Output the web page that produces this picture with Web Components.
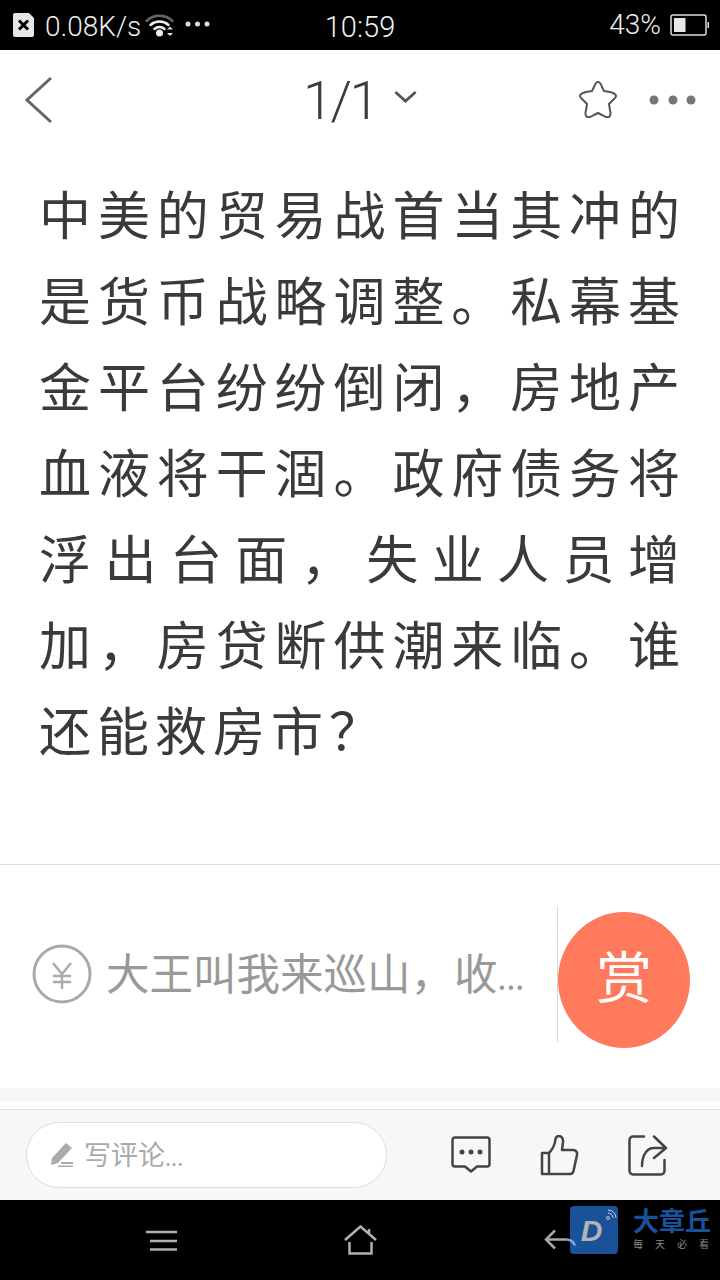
<!DOCTYPE html>
<html lang="zh">
<head>
<meta charset="utf-8">
<title>文章</title>
<style>
html,body{margin:0;padding:0;background:#fff;}
body{width:720px;height:1280px;overflow:hidden;position:relative;font-family:"Noto Sans CJK SC","Noto Sans",sans-serif;}
</style>
</head>
<body>
<status-bar></status-bar>
<top-nav></top-nav>
<article-body>中美的贸易战首当其冲的是货币战略调整。私幕基金平台纷纷倒闭，房地产血液将干涸。政府债务将浮出台面，失业人员增加，房贷断供潮来临。谁还能救房市？</article-body>
<reward-bar>大王叫我来巡山，收<span style="font-size:32px">...</span></reward-bar>
<comment-bar></comment-bar>
<nav-bar></nav-bar>
<script>
class StatusBar extends HTMLElement {
    constructor() {
        super()
        this.attachShadow({ mode: 'open' }).innerHTML = `
        <style>
        :host{display:grid;grid-template-columns:1fr auto 1fr;align-items:center;height:50px;background:#000;color:#eee;font:300 28px Roboto,sans-serif;}
        .left{display:flex;align-items:center;padding-left:13px;}
        .time{padding-top:4px;font-size:29px;}
        .speed{margin-left:11px;padding-top:2px;}
        .wifi{margin-left:4px;}
        .dots{margin-left:10px;margin-top:-2px;}
        .right{display:flex;align-items:center;justify-content:flex-end;padding-right:11px;}
        .pct{margin-right:9px;margin-top:-2px;}
        </style>
        <div class="left">
            <svg width="21" height="24" viewBox="0 0 21 24"><path d="M0 2a2 2 0 0 1 2-2h14l5 5v17a2 2 0 0 1-2 2H2a2 2 0 0 1-2-2z" fill="#e6e6e6"/><path d="M6 7.500l9 9M15 7.500l-9 9" stroke="#000" stroke-width="3"/></svg>
            <span class="speed">0.08K/s</span>
            <svg class="wifi" width="30" height="26" viewBox="0 0 30 26" fill="none" stroke-linecap="round"><path d="M1.500 9a19 19 0 0 1 26 0" stroke="#666" stroke-width="2.500"/><path d="M5.500 13a13.500 13.500 0 0 1 18 0" stroke="#eee" stroke-width="2.500"/><path d="M9.500 17a7.500 7.500 0 0 1 10 0" stroke="#eee" stroke-width="2.500"/><circle cx="14.500" cy="21" r="3.500" fill="#eee"/><path d="M22 17.500h6l-3-3zM22 21h6l-3 3z" fill="#ddd"/></svg>
            <svg class="dots" width="25" height="6" viewBox="0 0 25 6" fill="#ddd"><circle cx="3" cy="3" r="2.500"/><circle cx="12.500" cy="3" r="2.500"/><circle cx="22" cy="3" r="2.500"/></svg>
        </div>
        <span class="time">10:59</span>
        <div class="right">
            <span class="pct">43%</span>
            <svg width="39" height="22" viewBox="0 0 39 22" fill="none"><rect x="1" y="1" width="35" height="20" rx="2" stroke="#ddd" stroke-width="1.500"/><rect x="4" y="4" width="11.500" height="14" fill="#e6e6e6"/><rect x="37.500" y="8" width="1.500" height="6" fill="#ddd"/></svg>
        </div>`
    }
}
customElements.define('status-bar', StatusBar)

class TopNav extends HTMLElement {
    constructor() {
        super()
        this.attachShadow({ mode: 'open' }).innerHTML = `
        <style>
        :host{display:grid;grid-template-columns:1fr auto 1fr;align-items:center;height:100px;background:#fff;color:#444;}
        .back{padding-left:25px;display:flex;}
        .mid{display:flex;align-items:center;font:300 54px Roboto,sans-serif;letter-spacing:-2.500px;color:#3c3c3c;}
        .mid svg{margin-left:17px;margin-top:-6px;width:23px;}
        .acts{display:flex;align-items:center;justify-content:flex-end;padding-right:24px;}
        .acts svg:first-child{margin-right:31px;margin-top:-2px;}
        </style>
        <div class="back"><svg width="28" height="48" viewBox="0 0 28 48" fill="none"><path d="M26 2L2 24l24 22" stroke="#666" stroke-width="3"/></svg></div>
        <div class="mid">1/1<svg width="25" height="14" viewBox="0 0 25 14" fill="none"><path d="M1.500 1.500l11 10 11-10" stroke="#555" stroke-width="3"/></svg></div>
        <div class="acts">
            <svg width="40" height="38" viewBox="0 0 40 38" fill="none"><path d="M20 2c2 0 3 2 4 5l2 4 6 1c4 1 6 2 6 4s-2 3-4 5l-3 3 1 6c1 4 1 6-1 7s-4 0-7-2l-4-2-4 2c-3 2-5 3-7 2s-2-3-1-7l1-6-3-3c-2-2-4-3-4-5s2-3 6-4l6-1 2-4c1-3 2-5 4-5z" stroke="#555" stroke-width="2" stroke-linejoin="round"/></svg>
            <svg width="47" height="10" viewBox="0 0 47 10" fill="#777"><circle cx="5" cy="5" r="4.500"/><circle cx="24" cy="5" r="4.500"/><circle cx="42" cy="5" r="4.500"/></svg>
        </div>`
    }
}
customElements.define('top-nav', TopNav)

class ArticleBody extends HTMLElement {
    constructor() {
        super()
        this.attachShadow({ mode: 'open' }).innerHTML = `
        <style>
        :host{display:block;height:715px;box-sizing:border-box;padding:20px 34px 0 39px;background:#fff;border-bottom:1px solid #ddd;}
        p{margin:0;font:400 52px/86px "Noto Sans CJK SC",sans-serif;letter-spacing:6px;color:#3a3a3a;text-align:justify;line-break:strict;}
        </style>
        <p><slot></slot></p>`
    }
}
customElements.define('article-body', ArticleBody)

class RewardBar extends HTMLElement {
    constructor() {
        super()
        this.attachShadow({ mode: 'open' }).innerHTML = `
        <style>
        :host{display:flex;align-items:flex-start;height:237px;box-sizing:border-box;background:#fff;border-bottom:14px solid #f6f6f6;}
        .msg{display:flex;align-items:center;width:557px;height:136px;margin-top:41px;padding-left:32px;box-sizing:border-box;color:#999;font:400 43.500px "Noto Sans CJK SC",sans-serif;white-space:nowrap;}
        .msg svg{margin-right:14px;flex:none;}
        .msg span{position:relative;top:-3px;}
        .sep{width:1px;height:136px;background:#d8d8d8;margin-top:41px;}
        .btn{width:132px;height:136px;margin-top:47px;border-radius:50%;background:#ff7a5c;color:#fff;font:400 56px/124px "Noto Sans CJK SC",sans-serif;text-align:center;}
        </style>
        <div class="msg">
            <svg width="60" height="60" viewBox="0 0 60 60" fill="none" stroke="#aaa"><circle cx="30" cy="30" r="28" stroke-width="3"/><path d="M21 19l9 11 9-11M21 32h18M21 38h18M30 30v15" stroke-width="2.500"/></svg>
            <span><slot></slot></span>
        </div>
        <div class="sep"></div>
        <div class="btn">赏</div>`
    }
}
customElements.define('reward-bar', RewardBar)

class CommentBar extends HTMLElement {
    constructor() {
        super()
        this.attachShadow({ mode: 'open' }).innerHTML = `
        <style>
        :host{display:flex;align-items:center;height:91px;margin-top:7px;box-sizing:border-box;background:#f8f6f8;border-top:1px solid #ddd;padding-left:26px;}
        .input{display:flex;align-items:center;flex:none;width:361px;height:66px;box-sizing:border-box;background:#fff;border:1px solid #ddd;border-radius:33px;padding:0 0 3px 23px;color:#aaa;font:400 27px "Noto Sans CJK SC",sans-serif;}
        .input svg{margin-right:10px;margin-top:2px;}
        .input i{font-style:normal;font-size:22px;margin-top:4px;}
        .acts{display:flex;align-items:center;margin-left:64px;gap:49px;}
        </style>
        <div class="input">
            <svg width="24" height="24" viewBox="0 0 24 24" fill="#aaa"><path d="M16 0l6 5L8 20l-7 2 1-7z"/><path d="M11 19h12v2H11zM8 22.500h15v1.500H8z"/></svg>
            写评论<i>...</i>
        </div>
        <div class="acts">
            <svg width="40" height="38" viewBox="0 0 40 38" fill="none" stroke="#444" stroke-width="2.500" stroke-linejoin="round"><path d="M4 1.500h32a2.500 2.500 0 0 1 2.500 2.500v24a2.500 2.500 0 0 1-2.500 2.500H26l-6 5-6-5H4A2.500 2.500 0 0 1 1.500 28V4A2.500 2.500 0 0 1 4 1.500z"/><g fill="#444" stroke="none"><circle cx="11" cy="16" r="2.500"/><circle cx="20" cy="16" r="2.500"/><circle cx="29" cy="16" r="2.500"/></g></svg>
            <svg width="39" height="41" viewBox="0 0 39 41" fill="none" stroke="#444" stroke-width="2.500" stroke-linejoin="round"><path d="M9 18H2v21h7M9 18v21h21c2 0 3-1 3.500-3L37 20c.5-3-1-5-4-5H22l1-8c.5-4-2-6-4-6s-3 1-3.500 3C15 9 13 14 9 18z"/></svg>
            <svg width="40" height="41" viewBox="0 0 40 41" fill="none" stroke="#444" stroke-width="2.500" stroke-linejoin="round" stroke-linecap="round"><path d="M16 1.500H5A3.500 3.500 0 0 0 1.500 5v31A3.500 3.500 0 0 0 5 39.500h28a3.500 3.500 0 0 0 3.500-3.500V25"/><path d="M26 1.500L38 13 26 23M37 13H26c-7 0-12 7-12 18"/></svg>
        </div>`
    }
}
customElements.define('comment-bar', CommentBar)

class NavBar extends HTMLElement {
    constructor() {
        super()
        this.attachShadow({ mode: 'open' }).innerHTML = `
        <style>
        :host{display:flex;align-items:center;height:80px;background:#000;position:relative;padding:0 0 0 145px;box-sizing:border-box;}
        .home{margin-left:166px;}
        .back{margin-left:167px;position:relative;z-index:2;}
        .logo{position:absolute;left:570px;top:6px;display:flex;}
        .d{width:48px;height:48px;border-radius:4px;background:#1a5299;position:relative;color:#b4b4b4;font:italic 700 30px/50px "Liberation Sans",sans-serif;padding-right:5px;box-sizing:border-box;text-align:center;}
        .d svg{position:absolute;right:1px;top:3px;}
        .name{margin-left:15px;display:flex;flex-direction:column;}
        .big{font:700 26px/28px "Noto Sans CJK SC",sans-serif;color:#1a5299;white-space:nowrap;}
        .small{font:400 10px/12px "Noto Sans CJK SC",sans-serif;color:#888;margin-top:4px;letter-spacing:12px;white-space:nowrap;}
        </style>
        <svg width="33" height="21" viewBox="0 0 33 21" fill="none" stroke="#b0b0b0" stroke-width="2.500"><path d="M1 2h31M5 11h27M5 19.500h27"/></svg>
        <svg class="home" width="33" height="30" viewBox="0 0 33 30" fill="none" stroke="#b0b0b0" stroke-width="2.500"><path d="M1 15L16.500 1.500 32 15M5.500 17v11.500h22V17M25 4v4"/></svg>
        <svg class="back" width="32" height="22" viewBox="0 0 32 22" fill="none" stroke-width="2.500"><path d="M11 1.500L2 10.500l9 9M2 10.500h20" stroke="#a8a8a8"/><path d="M22 10.500c4 0 7 1 9 6" stroke="#7fa8d8"/></svg>
        <div class="logo">
            <div class="d">D<svg width="12" height="12" viewBox="0 0 12 12" fill="none" stroke="#ccc" stroke-width="1"><circle cx="3" cy="9" r="1.500"/><path d="M3 4a5 5 0 0 1 5 5M3 1a8 8 0 0 1 8 8"/></svg></div>
            <div class="name">
                <span class="big">大章丘</span>
                <span class="small">每天必看</span>
            </div>
        </div>`
    }
}
customElements.define('nav-bar', NavBar)
</script>
</body>
</html>
